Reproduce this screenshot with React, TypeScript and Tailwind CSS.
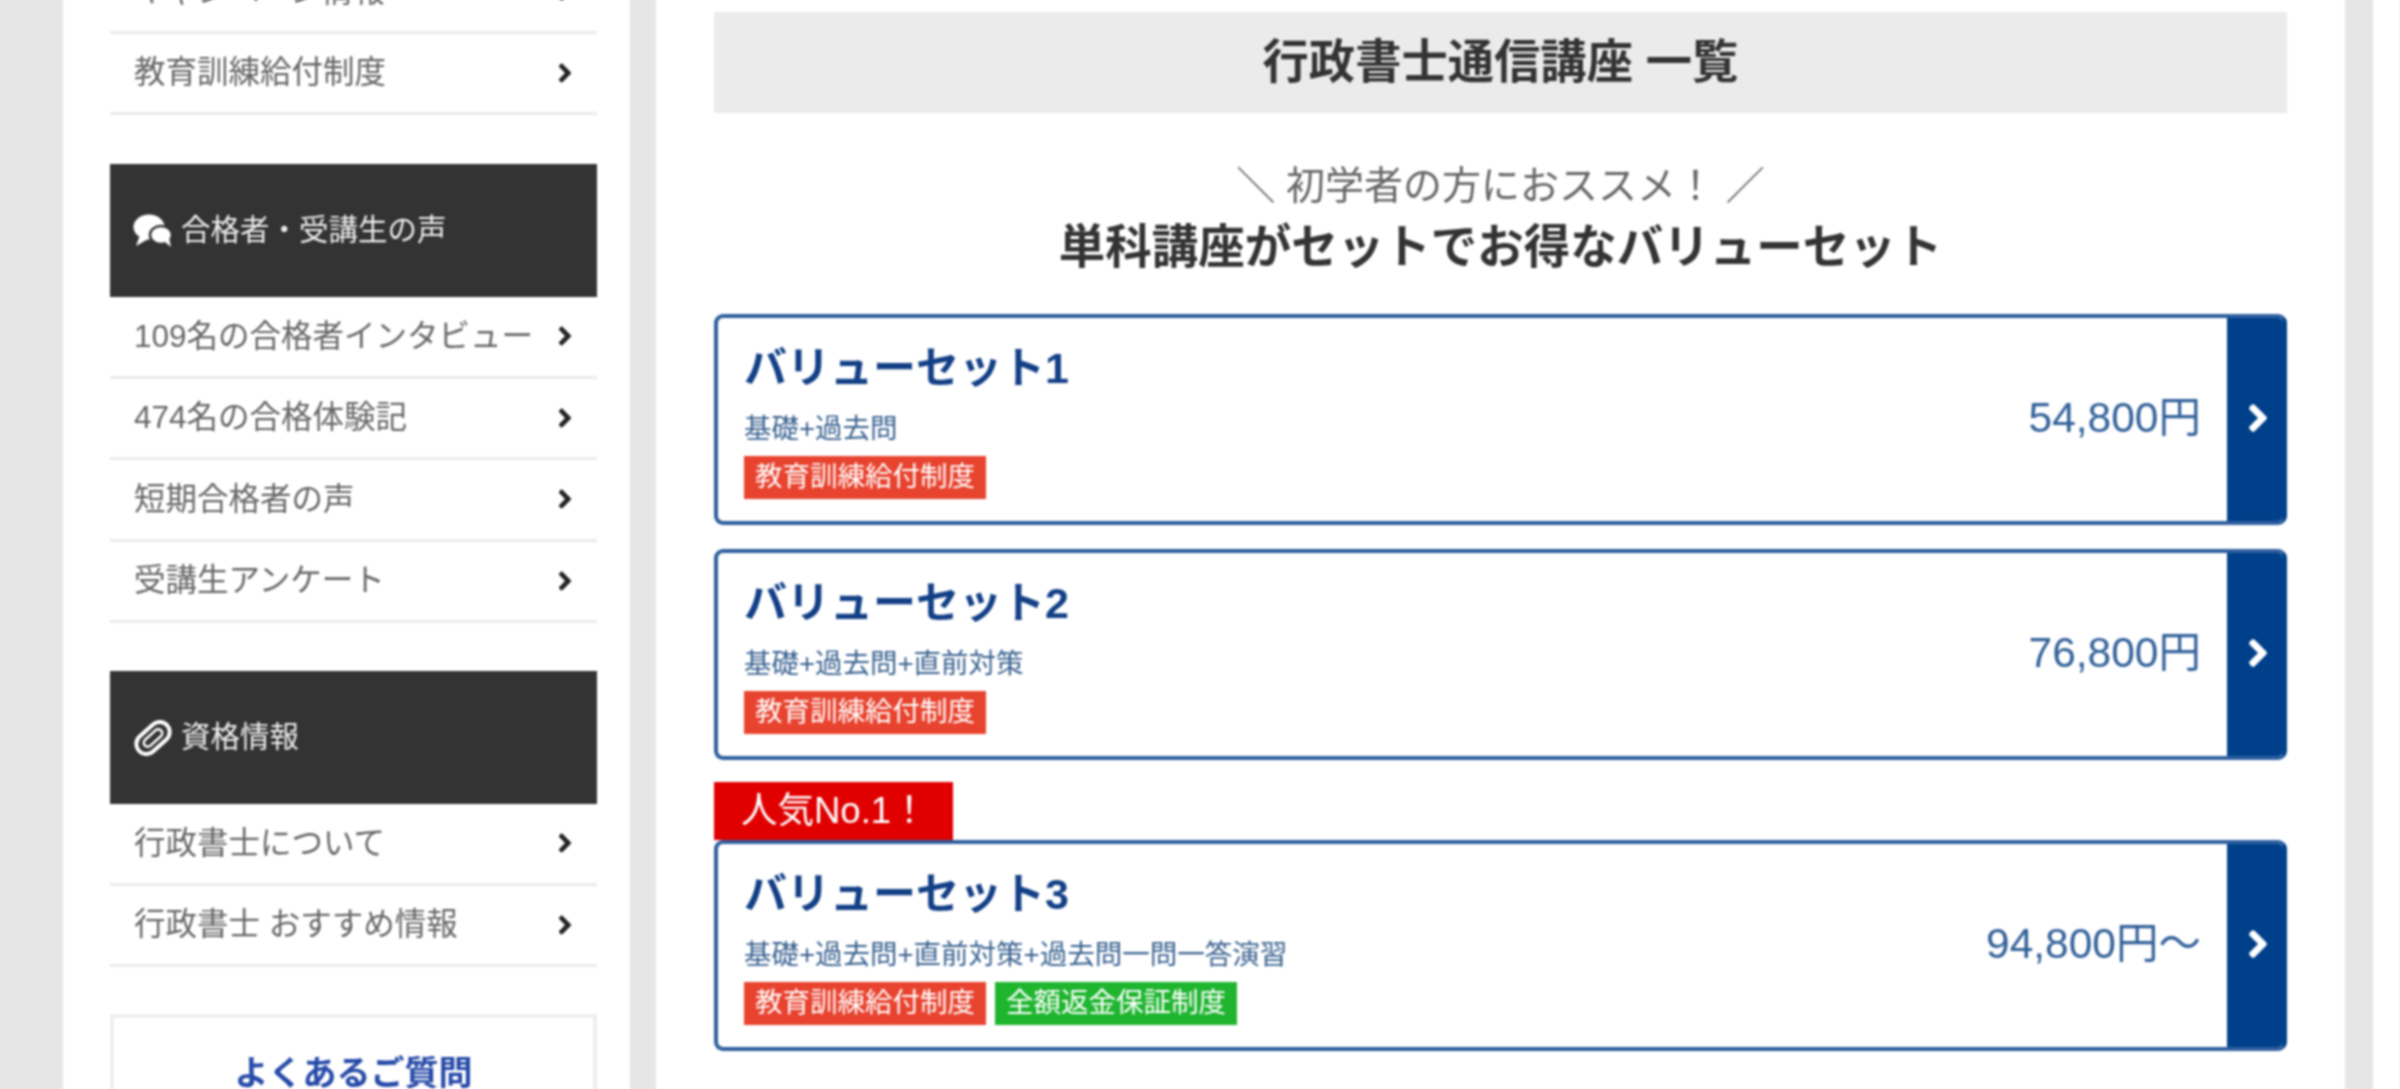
import { FaAngleRight } from "react-icons/fa";

const jp = `font-["Liberation_Sans","Noto_Sans_CJK_JP",sans-serif]`;

function Row({ label }: { label: string }) {
  return (
    <div className="flex h-[81.5px] items-center justify-between border-b-[3px] border-[#ebebeb] pl-[24px] pr-[23px] text-[31.5px] text-[#666]">
      <span className="whitespace-nowrap">{label}</span>
      <FaAngleRight className="h-[30px] w-[18px] shrink-0 text-[#222]" />
    </div>
  );
}

function Header({ icon, label }: { icon: React.ReactNode; label: string }) {
  return (
    <div className="flex h-[133px] items-center gap-[8px] bg-[#333] pl-[23px] text-[29.5px] text-[#eee]">
      {icon}
      <span>{label}</span>
    </div>
  );
}

function Badge({ color, label }: { color: string; label: string }) {
  return (
    <span className={`flex h-[43px] w-[242px] items-center justify-center text-[27.5px] text-white ${color}`}>{label}</span>
  );
}

function Card({ title, sub, price, badges }: { title: string; sub: string; price: string; badges: [string, string][] }) {
  return (
    <div className="flex h-[211px] overflow-hidden rounded-[9px] border-[4px] border-[#2f5f9f] border-r-[#003f8a] bg-white">
      <div className="flex min-w-0 flex-1 items-center justify-between pl-[26px] pr-[26px]">
        <div className="flex flex-col">
          <div className="text-[43px] font-bold leading-[54px] text-[#123f86]">{title}</div>
          <div className="mt-[14px] text-[27.5px] leading-[40px] text-[#3a6290]">{sub}</div>
          <div className="mt-[7px] flex gap-[9px]">
            {badges.map(([c, l]) => <Badge key={l} color={c} label={l} />)}
          </div>
        </div>
        <div className="mb-[3px] whitespace-nowrap text-[42.5px] text-[#33619a]">{price}</div>
      </div>
      <div className="flex w-[56px] shrink-0 items-center justify-center bg-[#003f8a] pb-[3px] pl-[6px]">
        <FaAngleRight className="h-[44px] w-[26px] text-white" />
      </div>
    </div>
  );
}

const red = "bg-[#e8432f]";
const green = "bg-[#1fb52f]";
const kyoiku: [string, string] = [red, "教育訓練給付制度"];

const comments = (
  <svg viewBox="0 0 40 34" className="h-[34px] w-[40px] shrink-0">
    <ellipse cx="16" cy="13" rx="15.5" ry="12.5" fill="#fff" />
    <path d="M7 21 L3 32 L17 24 Z" fill="#fff" />
    <ellipse cx="28" cy="21" rx="11" ry="9" fill="#fff" stroke="#333" strokeWidth="2.5" />
    <path d="M32 28 L38 33 L36 24 Z" fill="#fff" />
  </svg>
);

const clip = (
  <svg viewBox="0 0 40 36" className="h-[36px] w-[40px] shrink-0">
    <g transform="rotate(-42 20 18)" fill="none" stroke="#fff">
      <rect x="1" y="8" width="38" height="20" rx="10" strokeWidth="4" />
      <rect x="9" y="14" width="22" height="8" rx="4" strokeWidth="2.5" />
    </g>
  </svg>
);

export default function App() {
  return (
    <div className="h-[1089px] overflow-hidden bg-[#e6e6e6]">
      <div className={`-mt-[8px] flex h-[1105px] pl-[63px] blur-[1px] ${jp}`}>
        <aside className="h-full w-[567px] shrink-0 overflow-hidden bg-white pl-[47px] pr-[33px] pt-[8px]">
          <div className="-mt-[48px]">
            <Row label="キャンペーン情報" />
            <Row label="教育訓練給付制度" />
          </div>
          <div className="mt-[49px]">
            <Header icon={comments} label="合格者・受講生の声" />
            <Row label="109名の合格者インタビュー" />
            <Row label="474名の合格体験記" />
            <Row label="短期合格者の声" />
            <Row label="受講生アンケート" />
          </div>
          <div className="mt-[48px]">
            <Header icon={clip} label="資格情報" />
            <Row label="行政書士について" />
            <Row label="行政書士 おすすめ情報" />
          </div>
          <div className="mt-[47px] h-[120px] border-[4px] border-[#eee] pt-[30px] text-center text-[34px] font-bold text-[#2549a8]">
            よくあるご質問
          </div>
        </aside>
        <main className="ml-[26px] h-full w-[1689px] shrink-0 bg-white px-[58px] pt-[20px]">
          <h1 className="flex h-[101px] items-center justify-center bg-[#ebebeb] text-[46.3px] font-bold text-[#333]">行政書士通信講座 一覧</h1>
          <p className="mt-[46px] text-center text-[39px] leading-[54px] text-[#666]">＼ 初学者の方におススメ！ ／</p>
          <h2 className="mt-[2px] text-center text-[46.5px] font-bold leading-[64px] text-[#333]">単科講座がセットでお得なバリューセット</h2>
          <div className="mt-[35px] flex flex-col">
            <Card title="バリューセット1" sub="基礎+過去問" price="54,800円" badges={[kyoiku]} />
            <div className="mt-[24px]">
              <Card title="バリューセット2" sub="基礎+過去問+直前対策" price="76,800円" badges={[kyoiku]} />
            </div>
            <div className="mt-[22px] flex h-[58px] w-[239px] items-center bg-[#e00000] pl-[27px] text-[36.5px] text-white">人気No.1！</div>
            <Card title="バリューセット3" sub="基礎+過去問+直前対策+過去問一問一答演習" price="94,800円～" badges={[kyoiku, [green, "全額返金保証制度"]]} />
          </div>
        </main>
        <div className="ml-[28px] h-full flex-1 bg-white" />
      </div>
    </div>
  );
}
